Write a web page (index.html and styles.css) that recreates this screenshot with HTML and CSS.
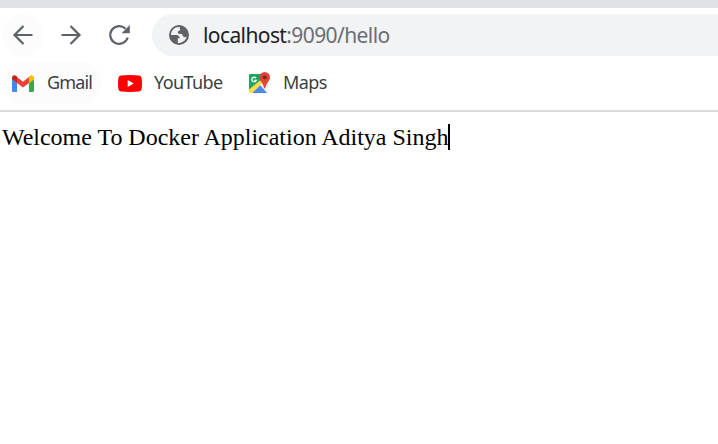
FILE: index.html
```html
<!DOCTYPE html>
<html lang="en">
<head>
<meta charset="utf-8">
<title>localhost:9090/hello</title>
<link rel="stylesheet" href="styles.css">
</head>
<body>
<header class="browser">
  <div class="tabstrip"></div>
  <nav class="toolbar">
    <button class="nav-button hovered" aria-label="Back"><svg width="24" height="24" viewBox="0 0 24 24"><path class="line" d="M21.5 12H3.5M12.5 3L3.5 12l9 9"/></svg></button>
    <button class="nav-button" aria-label="Forward"><svg width="24" height="24" viewBox="0 0 24 24"><path class="line" d="M2.500 12h18M11.500 3l9 9-9 9"/></svg></button>
    <button class="nav-button" aria-label="Reload"><svg width="24" height="24" viewBox="0 0 24 24"><path class="line" d="M20.700 14.500a8.900 8.900 0 1 1-2.200-8.800"/><path d="M22.800 2v8.200h-8.200z"/></svg></button>
    <div class="address">
      <svg class="globe" width="20" height="20" viewBox="0 0 20 20"><circle cx="10" cy="10" r="10"/><path class="land" d="M11 2.100C6 1.600 2 5.200 2 10h5.200c2.100 0 3.600 1.300 3.600 3.300h-2v4.600c4.400.5 8-2.500 8.900-6.400-1 .8-2.500.9-3.500-.1-.8-.8-.7-2-1.600-2.300-1.200-.4-3.500.3-3.800-1.600-.2-1.500 1.300-2.100 2.500-2.300-.5-1.200-.9-2.200-.3-3.100z"/></svg>
      <span class="url">localhost<span class="path">:9090/hello</span></span>
    </div>
  </nav>
  <nav class="bookmarks">
    <a class="bookmark gmail hovered"><svg width="22" height="17" viewBox="0 0 22 17"><path fill="#4285f4" d="M0 4l5 4v9H1.500Q0 17 0 15.500z"/><path fill="#34a853" d="M17 8l5-4v11.500q0 1.500-1.500 1.500H17z"/><path fill="#ea4335" d="M5 2l6 4.700L17 2v6l-6 4.500L5 8z"/><path fill="#c5221f" d="M0 3C0 .2 2.500-.3 4.300 1L5 1.700V8L0 4.300z"/><path fill="#fbbc04" d="M22 3c0-2.800-2.500-3.300-4.300-2L17 1.700V8l5-3.700z"/></svg><span>Gmail</span></a>
    <a class="bookmark youtube"><svg width="24" height="17" viewBox="0 0 24 17"><path fill="#f00" d="M3 .4Q12-.4 21 .4q2.200.2 2.600 2.500.8 5.600 0 11.200-.4 2.300-2.600 2.500-9 .8-18 0Q.8 16.400.4 14.100q-.8-5.600 0-11.200Q.8.600 3 .4z"/><path fill="#fff" d="M9.700 5v7l6-3.500z"/></svg><span>YouTube</span></a>
    <a class="bookmark maps"><svg width="24" height="24" viewBox="0 0 24 24"><path fill="#e3e5e8" d="M2 3h18v19H2z"/><path fill="#1fa463" d="M2 3h13v8L3 21H1V4.200Q1 3 2 3z"/><path fill="#4a89f3" d="M4 22l8-8 7 8z"/><path fill="#ffdc48" d="M1 18.500L15 7v5L4 22H2q-1 0-1-1z"/><path fill="#f4f4f4" d="M12.500 13.500l3-2.500 5 6.500V21l-1 1z"/><path fill="none" stroke="#fff" stroke-width="1.300" d="M8 7.200a2.300 2.300 0 1 0 .3 2.100H6.200"/><path fill="#e24335" d="M16.700 1a5.300 5.300 0 0 1 5.300 5.300c0 4.200-3.800 5-4.700 11h-1.200c-.9-6-4.700-6.800-4.700-11A5.300 5.300 0 0 1 16.700 1z"/><circle cx="16.700" cy="6.300" r="1.900" fill="#7c211b"/></svg><span>Maps</span></a>
  </nav>
</header>
<main class="page"><span class="message">Welcome To Docker Application Aditya Singh</span><i class="caret"></i></main>
</body>
</html>
```

FILE: styles.css
```css
* { box-sizing: border-box; }
body { margin: 0; background: #fff; overflow: hidden; }
svg { display: block; flex: none; }
.browser { height: 112px; border-bottom: 2px solid #dadada; font-family: "Noto Sans", sans-serif; }
.tabstrip { height: 8px; background: #dee1e6; }
.toolbar { height: 54px; display: flex; padding: 6px 0 6px 2px; }
.nav-button { width: 42px; height: 42px; margin-right: 6px; padding: 0; border: 0; border-radius: 50%; background: none; display: grid; place-items: center; flex: none; }
.nav-button svg { fill: #5f6368; }
.nav-button .line { fill: none; stroke: #5f6368; stroke-width: 2.2; }
.hovered { background: #fcfcfd; }
.address { flex: 1; height: 42px; margin-left: 6px; padding-left: 17px; display: flex; align-items: center; gap: 14px; border-radius: 21px 0 0 21px; background: #f1f3f4; }
.globe { fill: #5f6368; }
.globe .land { fill: #f1f3f4; }
.url { font-size: 21px; line-height: 42px; letter-spacing: -0.6px; color: #202124; white-space: nowrap; }
.path { color: #6b6f73; }
.bookmarks { height: 42px; display: flex; color: #3c4043; font-size: 18px; letter-spacing: -0.6px; }
.bookmark { height: 42px; display: flex; align-items: center; border-radius: 21px; white-space: nowrap; }
.bookmark span { line-height: 24px; padding-bottom: 2px; }
.gmail { width: 100px; margin-left: 2px; padding-left: 10px; gap: 13px; letter-spacing: -0.85px; }
.youtube { width: 130px; padding-left: 16px; gap: 12px; }
.maps { padding-left: 16px; gap: 11px; }
.page { display: flex; padding: 12px 0 0 2px; font: 24px/26px "Liberation Serif", serif; letter-spacing: -0.02px; color: #000; }
.message { white-space: nowrap; }
.caret { width: 2px; height: 26px; background: #000; }
```
